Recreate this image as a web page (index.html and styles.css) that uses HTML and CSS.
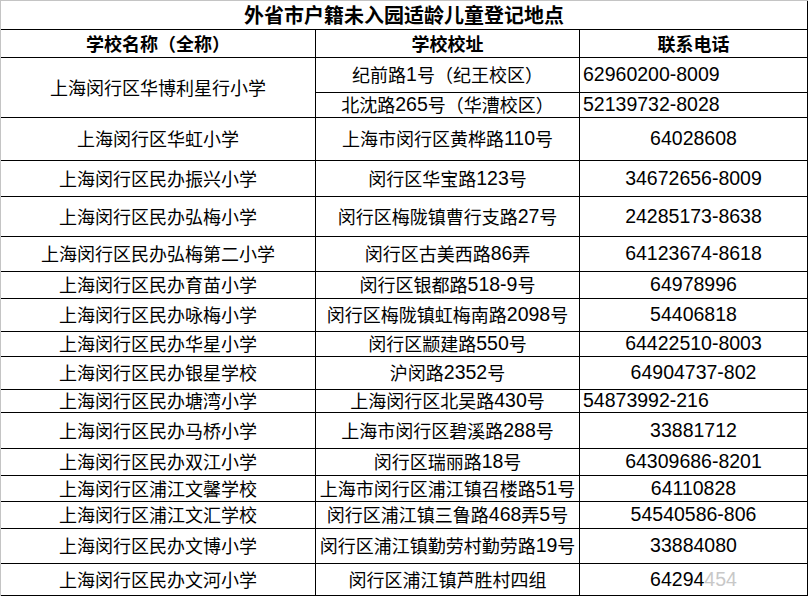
FILE: index.html
```html
<!DOCTYPE html>
<html lang="zh-CN">
<head>
<meta charset="utf-8">
<title>外省市户籍未入园适龄儿童登记地点</title>
<link rel="stylesheet" href="styles.css">
</head>
<body>
<div class="sheet">
  <div class="cell title">外省市户籍未入园适龄儿童登记地点</div>
  <div class="cell head">学校名称（全称）</div>
  <div class="cell head">学校校址</div>
  <div class="cell head">联系电话</div>

  <div class="cell span2">上海闵行区华博利星行小学</div>
  <div class="cell">纪前路<span class="n">1</span>号（纪王校区）</div>
  <div class="cell tel left">62960200-8009</div>
  <div class="cell">北沈路<span class="n">265</span>号（华漕校区）</div>
  <div class="cell tel left">52139732-8028</div>

  <div class="cell">上海闵行区华虹小学</div>
  <div class="cell">上海市闵行区黄桦路<span class="n">110</span>号</div>
  <div class="cell tel">64028608</div>

  <div class="cell">上海闵行区民办振兴小学</div>
  <div class="cell">闵行区华宝路<span class="n">123</span>号</div>
  <div class="cell tel">34672656-8009</div>

  <div class="cell">上海闵行区民办弘梅小学</div>
  <div class="cell">闵行区梅陇镇曹行支路<span class="n">27</span>号</div>
  <div class="cell tel">24285173-8638</div>

  <div class="cell">上海闵行区民办弘梅第二小学</div>
  <div class="cell">闵行区古美西路<span class="n">86</span>弄</div>
  <div class="cell tel">64123674-8618</div>

  <div class="cell">上海闵行区民办育苗小学</div>
  <div class="cell">闵行区银都路<span class="n">518-9</span>号</div>
  <div class="cell tel">64978996</div>

  <div class="cell">上海闵行区民办咏梅小学</div>
  <div class="cell">闵行区梅陇镇虹梅南路<span class="n">2098</span>号</div>
  <div class="cell tel">54406818</div>

  <div class="cell">上海闵行区民办华星小学</div>
  <div class="cell">闵行区颛建路<span class="n">550</span>号</div>
  <div class="cell tel">64422510-8003</div>

  <div class="cell">上海闵行区民办银星学校</div>
  <div class="cell">沪闵路<span class="n">2352</span>号</div>
  <div class="cell tel">64904737-802</div>

  <div class="cell">上海闵行区民办塘湾小学</div>
  <div class="cell">上海闵行区北吴路<span class="n">430</span>号</div>
  <div class="cell tel left">54873992-216</div>

  <div class="cell">上海闵行区民办马桥小学</div>
  <div class="cell">上海市闵行区碧溪路<span class="n">288</span>号</div>
  <div class="cell tel">33881712</div>

  <div class="cell">上海闵行区民办双江小学</div>
  <div class="cell">闵行区瑞丽路<span class="n">18</span>号</div>
  <div class="cell tel">64309686-8201</div>

  <div class="cell">上海闵行区浦江文馨学校</div>
  <div class="cell">上海市闵行区浦江镇召楼路<span class="n">51</span>号</div>
  <div class="cell tel">64110828</div>

  <div class="cell">上海闵行区浦江文汇学校</div>
  <div class="cell">闵行区浦江镇三鲁路<span class="n">468</span>弄<span class="n">5</span>号</div>
  <div class="cell tel">54540586-806</div>

  <div class="cell">上海闵行区民办文博小学</div>
  <div class="cell">闵行区浦江镇勤劳村勤劳路<span class="n">19</span>号</div>
  <div class="cell tel">33884080</div>

  <div class="cell">上海闵行区民办文河小学</div>
  <div class="cell">闵行区浦江镇芦胜村四组</div>
  <div class="cell tel">64294<span class="faded">454</span></div>
</div>
</body>
</html>
```

FILE: styles.css
```css
html, body {
  margin: 0;
  padding: 0;
  background: #fff;
}

.sheet {
  width: 808px;
  box-sizing: border-box;
  border-top: 1px solid #c4c4c4;
  border-left: 1px solid #c4c4c4;
  display: grid;
  grid-template-columns: 315px 264px 228px;
  grid-template-rows: 29px 28px 35px 25px 43px 36px 40px 35px 27px 33px 25px 33px 23px 36px 27px 26px 27px 35px 32px;
  font-family: "Noto Sans CJK SC", "Noto Sans", sans-serif;
  font-size: 18px;
  line-height: 1.2;
  color: #000;
}

.cell {
  box-sizing: border-box;
  border-right: 1px solid #000;
  border-bottom: 1px solid #000;
  display: flex;
  align-items: center;
  justify-content: center;
  white-space: nowrap;
  overflow: visible;
}

.title {
  grid-column: 1 / 4;
  font-size: 20px;
  font-weight: bold;
}

.head {
  font-weight: bold;
}

.span2 {
  grid-row: span 2;
}

.n,
.tel {
  font-family: "Liberation Sans", "Noto Sans CJK SC", sans-serif;
  font-size: 19.5px;
}

.n {
  line-height: 1;
}

.left {
  justify-content: flex-start;
  padding-left: 3px;
}

.faded {
  color: #c8c8c8;
}
```
